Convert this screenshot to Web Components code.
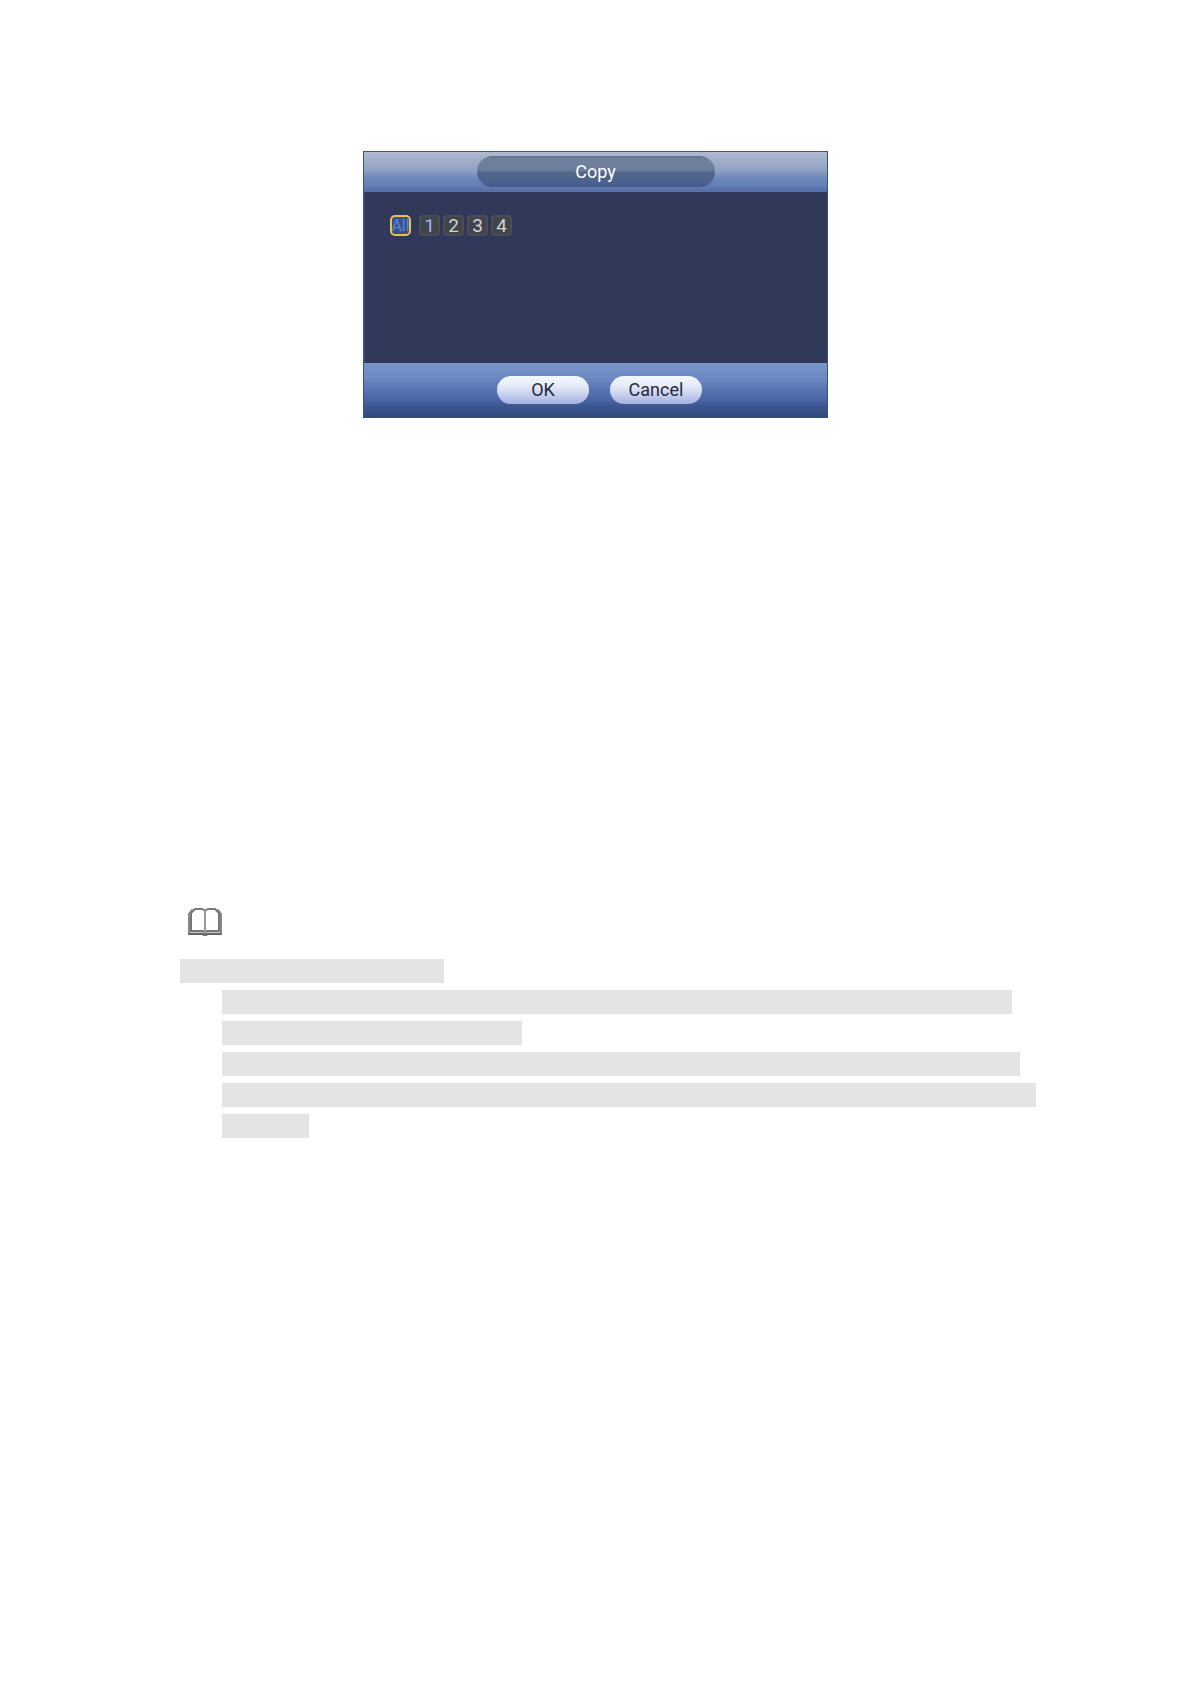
<!DOCTYPE html>
<html lang="en">
<head>
<meta charset="utf-8">
<title>Copy</title>
<style>
body {
  margin: 0;
  background: #fff;
  font-family: Roboto, "Liberation Sans", sans-serif;
}
</style>
</head>
<body>
<manual-page>
  <copy-dialog>
    <span slot="title">Copy</span>
    <channel-button all selected>All</channel-button>
    <channel-button current>1</channel-button>
    <channel-button>2</channel-button>
    <channel-button>3</channel-button>
    <channel-button>4</channel-button>
    <pill-button slot="actions">OK</pill-button>
    <pill-button slot="actions">Cancel</pill-button>
  </copy-dialog>
  <note-block slot="note">
    <blank-line width="264" slot="heading"></blank-line>
    <blank-line width="790"></blank-line>
    <blank-line width="300"></blank-line>
    <blank-line width="798"></blank-line>
    <blank-line width="814"></blank-line>
    <blank-line width="87"></blank-line>
  </note-block>
</manual-page>
<script>
class ManualPage extends HTMLElement {
  constructor() {
    super()
    const shadow = this.attachShadow({mode: 'open'})
    shadow.innerHTML = `
<style>
:host {
  display: flex;
  flex-direction: column;
  gap: 488px;
  box-sizing: border-box;
  min-height: 100vh;
  padding: 151px 0;
}
main {
  display: flex;
  justify-content: center;
}
aside {
  padding: 0 13% 0 180px;
}
</style>
<main><slot></slot></main>
<aside><slot name="note"></slot></aside>
`
  }
}
customElements.define('manual-page', ManualPage)

class CopyDialog extends HTMLElement {
  constructor() {
    super()
    const shadow = this.attachShadow({mode: 'open'})
    shadow.innerHTML = `
<style>
:host {
  display: block;
  box-sizing: border-box;
  width: 465px;
  max-width: 100%;
  border: 1px solid #3a5282;
  border-top-color: #46557a;
  background: #303959;
}
header {
  display: flex;
  justify-content: center;
  padding: 4px 0 5px;
  background: linear-gradient(#b0bbd0 0, #a2afca 20%, #8fa1c5 45%, #6f89bb 65%, #607cb5 88%, #5c72aa 92%, #5870a8);
}
h1 {
  box-sizing: border-box;
  width: 238px;
  margin: 0;
  border-radius: 16px;
  font-size: 18px;
  font-weight: 400;
  line-height: 31px;
  text-align: center;
  color: #fff;
  background: linear-gradient(#5d6d8c 0, #71809d 10%, #6b7b99 47%, #536588 53%, #4b6090 90%, #465b8a);
}
#channels {
  display: flex;
  align-items: flex-start;
  gap: 3px;
  min-height: 125px;
  padding: 23px 25px;
  border-left: 1px solid #3b487c;
}
footer {
  display: flex;
  justify-content: center;
  gap: 21px;
  padding: 13px 0 13px 8px;
  background: linear-gradient(#7896ca 0, #6d8bc4 25%, #5874b3 50%, #4862a3 70%, #3c5692 80%, #304878);
}
</style>
<header><h1><slot name="title"></slot></h1></header>
<div id="channels"><slot></slot></div>
<footer><slot name="actions"></slot></footer>
`
  }
}
customElements.define('copy-dialog', CopyDialog)

class ChannelButton extends HTMLElement {
  constructor() {
    super()
    const shadow = this.attachShadow({mode: 'open'})
    shadow.innerHTML = `
<style>
:host {
  display: block;
}
:host([all]) {
  margin-right: 5px;
}
button {
  display: flex;
  align-items: center;
  justify-content: center;
  box-sizing: border-box;
  width: 21px;
  height: 21px;
  padding: 0;
  border: 2px solid #4b4d56;
  border-radius: 4px;
  background: #41444b;
  color: #d2d3d0;
  font: 400 19px/17px Roboto, sans-serif;
}
:host([current]) button {
  color: #a3b3f0;
}
:host([all]) button {
  border-color: #e7c04f;
  border-radius: 5px;
  background: #3a5187;
  color: #5585dc;
  font-size: 16px;
}
</style>
<button type="button"><slot></slot></button>
`
  }
  connectedCallback() {
    const button = this.shadowRoot.querySelector('button')
    button.setAttribute('aria-pressed', this.hasAttribute('selected'))
    button.addEventListener('click', () => {
      this.toggleAttribute('selected')
      button.setAttribute('aria-pressed', this.hasAttribute('selected'))
    })
  }
}
customElements.define('channel-button', ChannelButton)

class PillButton extends HTMLElement {
  constructor() {
    super()
    const shadow = this.attachShadow({mode: 'open'})
    shadow.innerHTML = `
<style>
:host {
  display: block;
}
button {
  display: block;
  width: 92px;
  height: 28px;
  padding: 0;
  border: 0;
  border-radius: 14px;
  background: linear-gradient(#f4f7fd 0, #e6ebf8 35%, #c8d1ee 65%, #a2b1e0);
  color: #25293f;
  font: 400 18px/28px Roboto, sans-serif;
}
</style>
<button type="button"><slot></slot></button>
`
  }
}
customElements.define('pill-button', PillButton)

class NoteBlock extends HTMLElement {
  constructor() {
    super()
    const shadow = this.attachShadow({mode: 'open'})
    shadow.innerHTML = `
<style>
:host {
  display: block;
}
svg {
  display: block;
  width: 36px;
  height: 32px;
  margin: 0 0 21px 7px;
}
#lines {
  display: grid;
  gap: 7px;
  margin: 7px 0 0 42px;
}
</style>
<svg viewBox="0 0 36 32" fill="none" stroke-linejoin="round" stroke-linecap="round" aria-hidden="true">
  <path d="M5 4 2 8V28H34V8L31 4" fill="#ccc" stroke="#888" stroke-width="2"/>
  <path d="M4 25V7L8 3H14Q17 3 18 5Q19 3 22 3H28L32 7V25H22Q19 25 18 26Q17 25 14 25Z" fill="#fff" stroke="#777" stroke-width="2"/>
  <path d="M2 28H15Q18 30 21 28H34" stroke="#666" stroke-width="2"/>
  <path d="M18 5V26" stroke="#999" stroke-width="2"/>
</svg>
<slot name="heading"></slot>
<div id="lines"><slot></slot></div>
`
  }
}
customElements.define('note-block', NoteBlock)

class BlankLine extends HTMLElement {
  constructor() {
    super()
    const shadow = this.attachShadow({mode: 'open'})
    shadow.innerHTML = `
<style>
:host {
  display: block;
  max-width: 100%;
  height: 24px;
  background: #e4e4e4;
}
</style>
`
  }
  connectedCallback() {
    this.style.width = this.getAttribute('width') + 'px'
  }
}
customElements.define('blank-line', BlankLine)
</script>
</body>
</html>
